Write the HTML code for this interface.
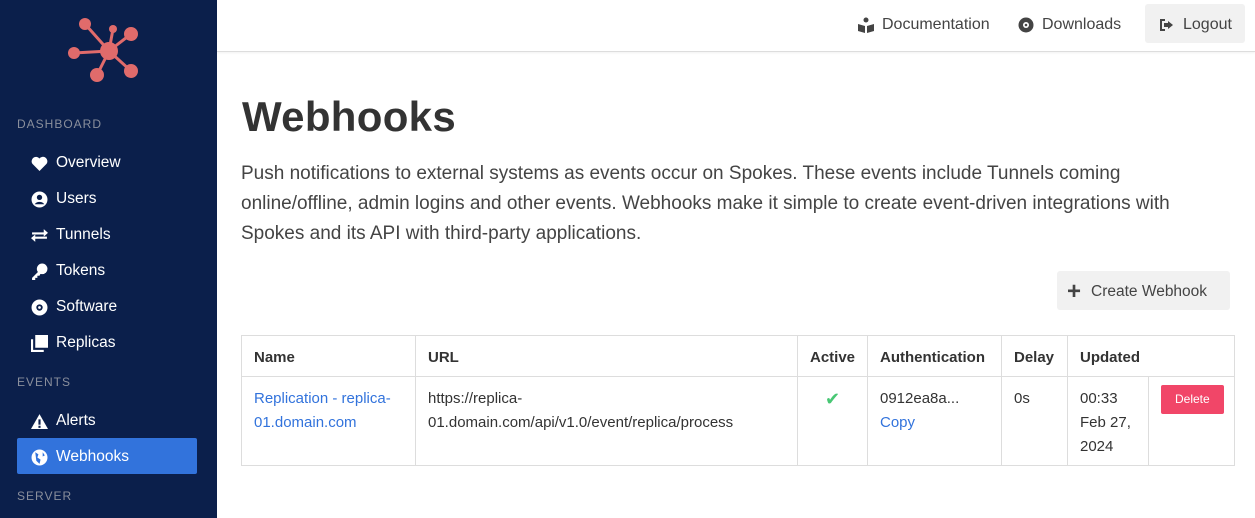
<!DOCTYPE html>
<html><head><meta charset="utf-8"><style>
*{box-sizing:border-box;margin:0;padding:0}
body{width:1255px;height:518px;overflow:hidden;font-family:"Liberation Sans",sans-serif;background:#fff;color:#333;position:relative}
.side{position:absolute;left:0;top:0;width:217px;height:518px;background:#0b1f4b}
.sec{position:absolute;left:17px;font-size:12px;letter-spacing:1px;color:#8a8f9c}
.it{position:absolute;left:17px;width:180px;height:36px;color:#fff;font-size:15.5px;display:flex;align-items:center;padding-left:14px;padding-top:2px}
.it svg{width:17px;height:17px;margin-right:8px;fill:#fff}
.act{background:#3273dc;border-radius:2px}
.top{position:absolute;left:217px;top:0;right:0;height:52px;border-bottom:1px solid #ddd;box-shadow:0 1px 2px rgba(0,0,0,.06)}
.nav{position:absolute;top:0;height:48px;display:flex;align-items:center;font-size:16px;color:#444;padding-top:2px}
.nav svg{width:16px;height:16px;fill:#444;margin-right:8px}
h1{position:absolute;left:242px;top:93px;font-size:42px;font-weight:bold;color:#333;letter-spacing:.3px}
p.d{position:absolute;left:241px;top:159px;width:990px;font-size:19px;line-height:30px;color:#444}
.btn{position:absolute;left:1057px;top:271px;width:173px;height:39px;background:#f1f1f1;border-radius:3px;font-size:15.5px;color:#444;display:flex;align-items:center;padding-left:10px;padding-top:2px}
table{position:absolute;left:241px;top:335px;border-collapse:collapse;font-size:15px;color:#333;table-layout:fixed;width:993px}
td,th{border:1px solid #ddd;vertical-align:top;text-align:left;padding:0 12px}
th{height:41px;vertical-align:middle;font-weight:bold;padding-top:2px}
td{height:89px;padding-top:10px;line-height:24px}
a{color:#3273dc;text-decoration:none}
.del{display:inline-block;background:#f14668;color:#fff;font-size:12px;padding:0 14px;height:29px;line-height:29px;border-radius:2px;margin-top:-2px}
</style></head><body>
<div class="side">
<svg style="position:absolute;left:64px;top:16px" width="80" height="70" viewBox="0 0 80 70"><g stroke="#e06b6b" stroke-width="3" fill="#e06b6b"><line x1="45" y1="35" x2="21" y2="8"/><line x1="45" y1="35" x2="49" y2="13"/><line x1="45" y1="35" x2="67" y2="18"/><line x1="45" y1="35" x2="10" y2="37"/><line x1="45" y1="35" x2="33" y2="59"/><line x1="45" y1="35" x2="67" y2="55"/></g><g fill="#e06b6b"><circle cx="45" cy="35" r="9"/><circle cx="21" cy="8" r="6"/><circle cx="49" cy="13" r="4"/><circle cx="67" cy="18" r="7"/><circle cx="10" cy="37" r="6"/><circle cx="33" cy="59" r="7"/><circle cx="67" cy="55" r="7"/></g></svg>
<div class="sec" style="top:117px">DASHBOARD</div>
<div class="it" style="top:144px"><svg viewBox="0 0 16 16"><path d="M8 15L1.5 8.5A4 4 0 017.9 3.3 4 4 0 0114.5 8.5z"/></svg>Overview</div>
<div class="it" style="top:180px"><svg viewBox="0 0 16 16"><circle cx="8" cy="8" r="7.5"/><circle cx="8" cy="6" r="2.5" fill="#0b1f4b"/><path d="M3.5 12.5a5 4 0 019 0" fill="#0b1f4b"/></svg>Users</div>
<div class="it" style="top:216px"><svg viewBox="0 0 16 16"><path d="M1 5h11V2l4 3.5-4 3.5V7H1zM15 11H4v3L0 10.5 4 7v2h11z"/></svg>Tunnels</div>
<div class="it" style="top:252px"><svg viewBox="0 0 16 16"><circle cx="10.5" cy="5.5" r="5"/><path d="M7 8L1 14v2h3v-2h2v-2h2l1-2z"/></svg>Tokens</div>
<div class="it" style="top:288px"><svg viewBox="0 0 16 16"><circle cx="8" cy="8" r="7.5"/><circle cx="8" cy="8" r="3" fill="#0b1f4b"/><circle cx="8" cy="8" r="1.3"/></svg>Software</div>
<div class="it" style="top:324px"><svg viewBox="0 0 16 16"><rect x="4" y="0" width="12" height="12"/><path d="M0 4h2v10h10v2H0z"/></svg>Replicas</div>
<div class="sec" style="top:375px">EVENTS</div>
<div class="it" style="top:402px"><svg viewBox="0 0 16 16"><path d="M8 1l8 14H0z"/><rect x="7" y="6" width="2" height="5" fill="#0b1f4b"/><rect x="7" y="12" width="2" height="2" fill="#0b1f4b"/></svg>Alerts</div>
<div class="it act" style="top:438px"><svg viewBox="0 0 16 16"><circle cx="8" cy="8" r="7.5"/><path d="M4 3l3 2-1 3 3 2-1 4-3-3zM11 3l2 3-2 1z" fill="#3273dc"/></svg>Webhooks</div>
<div class="sec" style="top:489px">SERVER</div>
</div>
<div class="top">
<div class="nav" style="left:641px"><svg viewBox="0 0 16 16"><circle cx="8" cy="3" r="2.5"/><path d="M0 7l7 2v7L0 14zM16 7l-7 2v7l7-2z"/></svg>Documentation</div>
<div class="nav" style="left:801px"><svg viewBox="0 0 16 16"><circle cx="8" cy="8" r="7.5"/><circle cx="8" cy="8" r="3" fill="#fff"/><circle cx="8" cy="8" r="1.3"/></svg>Downloads</div>
<div class="nav" style="left:928px;top:4px;height:39px;width:100px;background:#f1f1f1;border-radius:3px;padding-left:14px"><svg viewBox="0 0 16 16"><path d="M6 2H1v12h5v-2H3V4h3zM9 4v2H5v4h4v2l5-4z"/></svg>Logout</div>
</div>
<h1>Webhooks</h1>
<p class="d">Push notifications to external systems as events occur on Spokes. These events include Tunnels coming online/offline, admin logins and other events. Webhooks make it simple to create event-driven integrations with Spokes and its API with third-party applications.</p>
<div class="btn"><span style="font-size:24px;margin-right:10px;font-weight:bold;line-height:1">+</span>Create Webhook</div>
<table>
<colgroup><col style="width:174px"><col style="width:382px"><col style="width:70px"><col style="width:134px"><col style="width:66px"><col style="width:81px"><col style="width:86px"></colgroup>
<tr><th>Name</th><th>URL</th><th>Active</th><th>Authentication</th><th>Delay</th><th style="border-right:none">Updated</th><th style="border-left:none"></th></tr>
<tr><td><a>Replication - replica-01.domain.com</a></td><td>https://replica-<br>01.domain.com/api/v1.0/event/replica/process</td><td style="text-align:center;color:#48c774;font-size:18px">✔</td><td>0912ea8a...<br><a>Copy</a></td><td>0s</td><td>00:33<br>Feb 27,<br>2024</td><td><span class="del">Delete</span></td></tr>
</table>
</body></html>
